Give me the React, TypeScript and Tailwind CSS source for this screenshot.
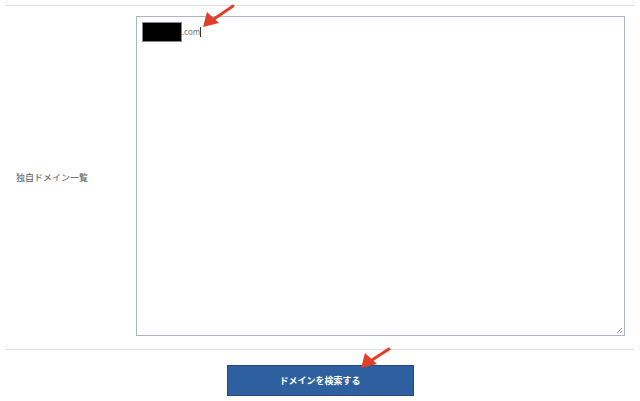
export default function App() {
  return (
    <div className="relative w-[640px] h-[401px] bg-white overflow-hidden" style={{ fontFamily: '"Noto Sans CJK JP", "Noto Sans", sans-serif' }}>
      <div className="pt-[5px] px-[5px]">
        <div className="border-t border-[#dcdcdc] w-[630px]" />
      </div>

      {/* Domain list row */}
      <div className="flex items-center pt-[10px] pb-[13px]">
        <div className="w-[136px] pl-[16px] text-[9px] text-[#555] pt-[4px]">独自ドメイン一覧</div>
        <div className="relative w-[489px] h-[320px] border border-[#a9b6c9] bg-white">
          <div className="flex items-center pt-[5px] pl-[5px]">
            <div className="w-[40px] h-[20px] bg-black border border-[#888]" />
            <span className="text-[8px] text-[#777] leading-none">.com</span>
            <span className="w-px h-[10px] bg-[#333]" />
          </div>
          {/* resize grip */}
          <svg className="absolute right-[1px] bottom-[1px]" width="8" height="8" viewBox="0 0 8 8">
            <path d="M7 2 L2 7 M7 5 L5 7" stroke="#999" strokeWidth="1" />
          </svg>
        </div>
      </div>

      <div className="px-[5px]">
        <div className="border-t border-[#dcdcdc] w-[629px]" />
      </div>

      <div className="flex justify-center pt-[15px]">
        <button className="w-[187px] h-[31px] bg-[#2e5f9e] border border-[#23487a] text-white text-[9px] font-bold">
          ドメインを検索する
        </button>
      </div>

      {/* annotation arrows */}
      <svg className="absolute left-0 top-0 pointer-events-none" width="640" height="401">
        <line x1="233" y1="6" x2="214" y2="19" stroke="#e0402a" strokeWidth="3" strokeLinecap="round" />
        <polygon points="203,27 207,12 219,23" fill="#e0402a" />
        <line x1="389" y1="349" x2="372" y2="360" stroke="#e0402a" strokeWidth="3" strokeLinecap="round" />
        <polygon points="361,368 365,353 377,364" fill="#e0402a" />
      </svg>
    </div>
  );
}
